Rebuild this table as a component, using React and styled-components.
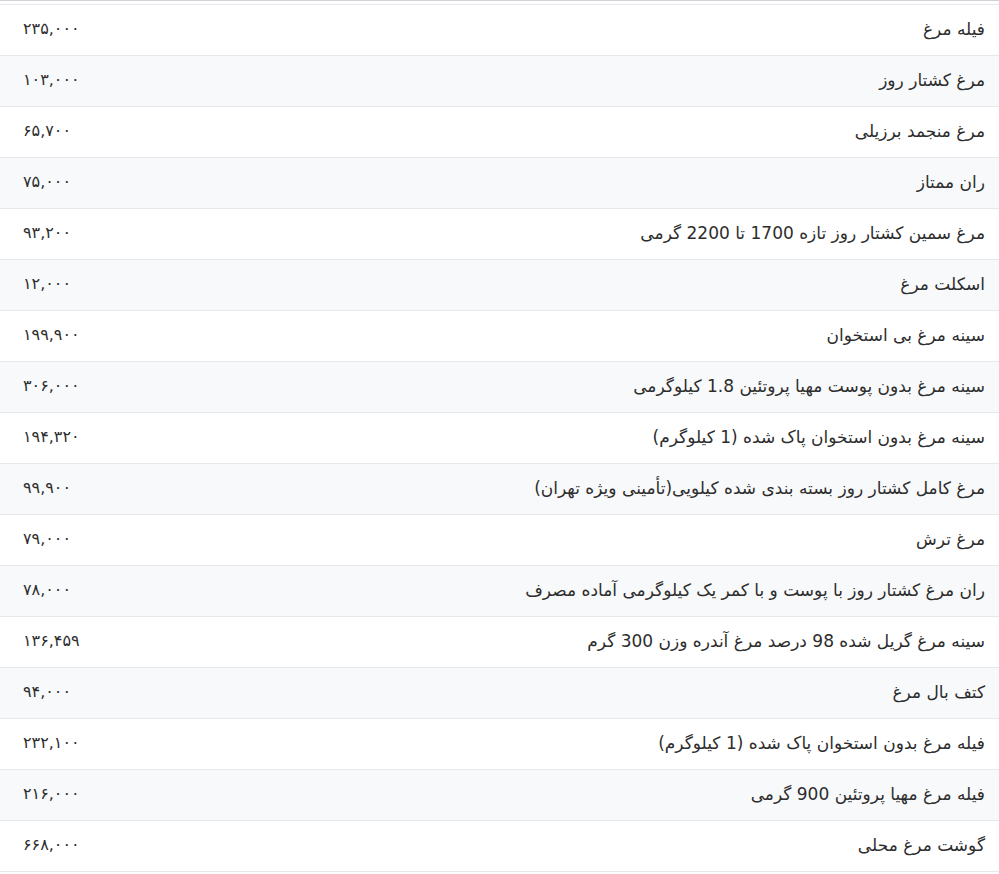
import React from "react";
import styled, { createGlobalStyle } from "styled-components";

const GlobalStyle = createGlobalStyle`
  html, body {
    margin: 0;
    padding: 0;
    background: #ffffff;
  }
  body {
    font-family: "DejaVu Sans", "Noto Sans", sans-serif;
    color: #2d2d2d;
  }
`;

const rows = [
  { name: "فیله مرغ", price: "۲۳۵,۰۰۰" },
  { name: "مرغ کشتار روز", price: "۱۰۳,۰۰۰" },
  { name: "مرغ منجمد برزیلی", price: "۶۵,۷۰۰" },
  { name: "ران ممتاز", price: "۷۵,۰۰۰" },
  { name: "مرغ سمین کشتار روز تازه 1700 تا 2200 گرمی", price: "۹۳,۲۰۰" },
  { name: "اسکلت مرغ", price: "۱۲,۰۰۰" },
  { name: "سینه مرغ بی استخوان", price: "۱۹۹,۹۰۰" },
  { name: "سینه مرغ بدون پوست مهیا پروتئین 1.8 کیلوگرمی", price: "۳۰۶,۰۰۰" },
  { name: "سینه مرغ بدون استخوان پاک شده (1 کیلوگرم)", price: "۱۹۴,۳۲۰" },
  { name: "مرغ کامل کشتار روز بسته بندی شده کیلویی(تأمینی ویژه تهران)", price: "۹۹,۹۰۰" },
  { name: "مرغ ترش", price: "۷۹,۰۰۰" },
  { name: "ران مرغ کشتار روز با پوست و با کمر یک کیلوگرمی آماده مصرف", price: "۷۸,۰۰۰" },
  { name: "سینه مرغ گریل شده 98 درصد مرغ آندره وزن 300 گرم", price: "۱۳۶,۴۵۹" },
  { name: "کتف بال مرغ", price: "۹۴,۰۰۰" },
  { name: "فیله مرغ بدون استخوان پاک شده (1 کیلوگرم)", price: "۲۳۲,۱۰۰" },
  { name: "فیله مرغ مهیا پروتئین 900 گرمی", price: "۲۱۶,۰۰۰" },
  { name: "گوشت مرغ محلی", price: "۶۶۸,۰۰۰" },
];

const Wrapper = styled.div`
  border-top: 1px solid #cfd2d6;
  padding-top: 3px;
`;

const Table = styled.div`
  direction: rtl;
  border-top: 1px solid #e6e8eb;
`;

const Row = styled.div`
  display: flex;
  align-items: center;
  justify-content: space-between;
  box-sizing: border-box;
  height: 51px;
  border-bottom: 1px solid #e6e8eb;
  background: ${(p) => (p.$striped ? "#f8f9fa" : "#ffffff")};
  padding: 0 14px 3px 23px;
`;

const Name = styled.span`
  font-size: 17px;
  line-height: 24px;
  white-space: nowrap;
`;

const Price = styled.span`
  font-size: 16px;
  line-height: 24px;
  letter-spacing: 1.5px;
  direction: ltr;
  text-align: left;
`;

export default function App() {
  return (
    <>
      <GlobalStyle />
      <Wrapper>
        <Table>
          {rows.map((r, i) => (
            <Row key={i} $striped={i % 2 === 1}>
              <Name>{r.name}</Name>
              <Price>{r.price}</Price>
            </Row>
          ))}
        </Table>
      </Wrapper>
    </>
  );
}
